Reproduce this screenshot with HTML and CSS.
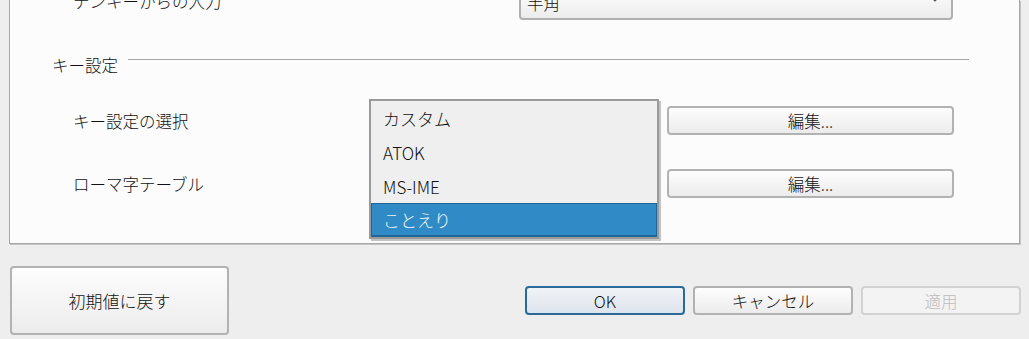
FILE: index.html
```html
<!DOCTYPE html>
<html lang="ja">
<head>
<meta charset="utf-8">
<link rel="stylesheet" href="styles.css">
</head>
<body>
<div class="panel">
  <div class="row row-top">
    <div class="label label-top">テンキーからの入力</div>
    <div class="combo combo-top">
      <span>半角</span>
      <svg class="chev" width="12" height="8" viewBox="0 0 12 8"><path d="M1 1 L6 6 L11 1" fill="none" stroke="#555" stroke-width="1.2"/></svg>
    </div>
  </div>

  <div class="section">
    <span class="section-title">キー設定</span>
    <span class="section-line"></span>
  </div>

  <div class="row row-one">
    <div class="label">キー設定の選択</div>
    <div class="combo-wrap">
      <div class="combo combo-hidden"></div>
      <ul class="popup">
        <li class="item">カスタム</li>
        <li class="item">ATOK</li>
        <li class="item">MS-IME</li>
        <li class="item selected">ことえり</li>
      </ul>
    </div>
    <button class="btn edit">編集...</button>
  </div>

  <div class="row row-two">
    <div class="label">ローマ字テーブル</div>
    <div class="combo-wrap">
      <div class="combo combo-hidden"></div>
    </div>
    <button class="btn edit">編集...</button>
  </div>
</div>

<div class="footer">
  <button class="btn reset">初期値に戻す</button>
  <div class="actions">
    <button class="btn ok">OK</button>
    <button class="btn">キャンセル</button>
    <button class="btn disabled">適用</button>
  </div>
</div>
</body>
</html>
```

FILE: styles.css
```css
html, body {
  margin: 0;
  padding: 0;
  background: #eeeeee;
  width: 1029px;
  height: 339px;
  overflow: hidden;
  font-family: "Noto Sans CJK JP", "Noto Sans", sans-serif;
  font-size: 16px;
  color: #111;
}

.panel {
  margin-left: 9px;
  width: 1009px;
  height: 243px;
  background: #fcfcfc;
  border: 1px solid #a8a8a8;
  border-top: none;
  box-shadow: 1px 1px 0 #c4c4c4;
  display: flex;
  flex-direction: column;
}

.row {
  display: flex;
  align-items: center;
  padding-left: 63px;
}

.row-top {
  margin-top: -8px;
  height: 27px;
  align-items: flex-start;
}

.label {
  width: 296px;
  line-height: 18px;
  font-size: 16.5px;
  font-weight: 300;
}

.label-top {
  width: 446px;
}

.combo {
  box-sizing: border-box;
  height: 28px;
  border: 2px solid #b0b0b0;
  border-radius: 4px;
  background: linear-gradient(#fbfbfb, #ececec);
}

.combo-top {
  width: 434px;
  display: flex;
  justify-content: space-between;
  align-items: flex-start;
  padding: 0 10px 0 6px;
  line-height: 18px;
  font-size: 16.5px;
  font-weight: 300;
}

.chev {
  margin-top: 1px;
}

.section {
  display: flex;
  align-items: flex-start;
  margin-top: 36px;
  padding-left: 42px;
  padding-right: 50px;
  height: 20px;
}

.section-title {
  line-height: 20px;
  font-size: 16.5px;
  font-weight: 300;
}

.section-line {
  flex: 1;
  height: 1px;
  margin-top: 4px;
  margin-left: 10px;
  background: #a8a8a8;
}

.row-one {
  margin-top: 31px;
}

.row-two {
  margin-top: 34px;
}

.combo-wrap {
  position: relative;
  width: 290px;
  height: 29px;
  margin-right: 8px;
}

.combo-hidden {
  height: 29px;
}

.popup {
  position: absolute;
  left: 0;
  top: -7px;
  width: 286px;
  margin: 0;
  padding: 0;
  list-style: none;
  background: #efefef;
  border: 2px solid #9a9a9a;
  box-shadow: 2px 2px 0 #c2c2c2;
  font-family: "Noto Sans CJK JP", "Noto Sans", sans-serif;
  font-size: 17px;
  font-weight: 300;
  z-index: 2;
}

.item {
  height: 34px;
  line-height: 35px;
  padding-left: 12px;
  color: #111;
}

.item.selected {
  box-sizing: border-box;
  background: #2f8ac6;
  border: 1px solid #1f6597;
  border-bottom-width: 2px;
  color: #f2f8fc;
  padding-left: 11px;
  line-height: 31px;
}

.btn {
  box-sizing: border-box;
  font-family: "Noto Sans CJK JP", "Noto Sans", sans-serif;
  font-size: 16.5px;
  font-weight: 300;
  color: #111;
  border: 2px solid #b2b2b2;
  border-radius: 4px;
  background: linear-gradient(#fdfdfd, #ececec);
  padding: 0;
  height: 29px;
  width: 160px;
}

.edit {
  width: 287px;
}

.footer {
  display: flex;
  justify-content: space-between;
  align-items: flex-start;
  padding: 22px 8px 0 10px;
}

.reset {
  width: 219px;
  height: 69px;
  font-size: 17px;
}

.actions {
  display: flex;
  gap: 8px;
  margin-top: 20px;
}

.ok {
  border-color: #2a6a9a;
  background: linear-gradient(#f0f3f7, #dde4ec);
}

.disabled {
  color: #bcbcbc;
  border-color: #d2d2d2;
  background: #f3f3f3;
}
```
